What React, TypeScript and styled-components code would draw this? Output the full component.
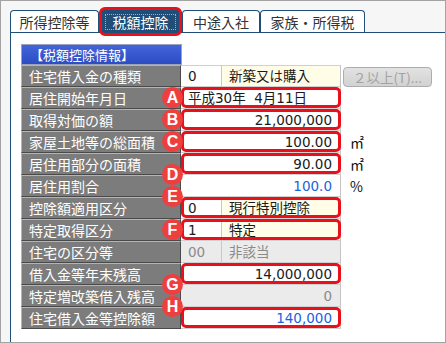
import React from 'react';
import styled, { createGlobalStyle, css } from 'styled-components';

const GlobalStyle = createGlobalStyle`
  html, body { margin: 0; padding: 0; background: #ffffff; }
  body { font-family: "DejaVu Sans", "Noto Sans CJK JP", sans-serif; }
`;

const RED = '#e8101a';
const NAVY = '#1f4e79';

const Frame = styled.div`
  width: 446px;
  height: 343px;
  box-sizing: border-box;
  border: 1px solid #a3a3a3;
  background: #f6f6f6;
  overflow: hidden;
  display: flex;
  flex-direction: column;
`;

const TabBar = styled.div`
  display: flex;
  align-items: flex-end;
  height: 31px;
  padding-left: 9px;
  flex-shrink: 0;
`;

const Tab = styled.div<{ $active?: boolean; $w: number }>`
  position: relative;
  z-index: 1;
  width: ${p => p.$w}px;
  height: 22px;
  box-sizing: border-box;
  display: flex;
  align-items: center;
  justify-content: center;
  border: 1px solid ${NAVY};
  border-bottom: none;
  border-radius: 4px 4px 0 0;
  background: #ffffff;
  color: #333333;
  font-family: "Noto Sans CJK JP", sans-serif;
  font-size: 14px;
  line-height: 20px;

  ${p =>
    p.$active &&
    css`
      background: ${NAVY};
      color: #ffffff;

      &::before {
        content: '';
        position: absolute;
        inset: 3px 5px 2px 5px;
        border: 1px dotted #9fb2c6;
      }

      &::after {
        content: '';
        position: absolute;
        top: -4px;
        bottom: -4px;
        left: -1px;
        right: -1px;
        border: 3px solid ${RED};
        border-radius: 6px;
      }
    `}
`;

const Panel = styled.div`
  flex: 1;
  margin-left: 9px;
  border-top: 1px solid ${NAVY};
  border-left: 1px solid ${NAVY};
  background: #ffffff;
  padding: 11px 0 0 10px;
`;

const Header = styled.div`
  width: 161px;
  height: 21px;
  box-sizing: border-box;
  border: 1px solid #9aa3b8;
  background: linear-gradient(#4464dc, #2c4cc4);
  color: #ffffff;
  font-family: "Noto Sans CJK JP", sans-serif;
  font-size: 13px;
  line-height: 19px;
  padding-left: 8px;
`;

const Rows = styled.div`
  display: flex;
  flex-direction: column;
`;

const Row = styled.div`
  display: flex;
  height: 22px;
`;

const Label = styled.div`
  width: 160px;
  height: 22px;
  box-sizing: border-box;
  flex-shrink: 0;
  display: flex;
  align-items: center;
  padding-left: 7px;
  background: #7c7c7c;
  border-top: 1px solid #b4b4b4;
  border-left: 1px solid #b4b4b4;
  border-bottom: 1px solid #4a4a4a;
  border-right: 1px solid #4a4a4a;
  color: #ffffff;
  font-family: "Noto Sans CJK JP", sans-serif;
  font-size: 14px;
  line-height: 20px;
`;

const Value = styled.div`
  position: relative;
  width: 160px;
  height: 22px;
  box-sizing: border-box;
  flex-shrink: 0;
  display: flex;
  border-bottom: 1px solid #d0d0d0;
  border-right: 1px solid #c4c4c4;

  ${Row}:first-child & {
    border-top: 1px solid #d0d0d0;
  }
`;

type Tone = 'plain' | 'yellow' | 'disabled';
type Ink = 'black' | 'blue' | 'gray';

const toneBg: Record<Tone, string> = {
  plain: '#ffffff',
  yellow: '#fffde8',
  disabled: '#ebebeb',
};

const inkColor: Record<Ink, string> = {
  black: '#1a1a1a',
  blue: '#1a62dc',
  gray: '#8a8a8a',
};

const Cell = styled.div<{ $tone: Tone; $ink: Ink; $right?: boolean; $code?: boolean }>`
  display: flex;
  align-items: center;
  box-sizing: border-box;
  white-space: pre;
  background: ${p => toneBg[p.$tone]};
  color: ${p => inkColor[p.$ink]};
  font-size: 13.5px;
  line-height: 20px;
  justify-content: ${p => (p.$right ? 'flex-end' : 'flex-start')};
  padding: ${p => (p.$right ? '0 8px 0 0' : '0 0 0 7px')};
  ${p =>
    p.$code
      ? css`
          width: 41px;
          flex-shrink: 0;
          border-right: 1px solid #c8c8c8;
        `
      : css`
          flex: 1;
        `}
`;

const Highlight = styled.div`
  position: absolute;
  top: 0;
  bottom: 0;
  left: 0;
  right: -1px;
  border: 3px solid ${RED};
  border-radius: 5px;
  pointer-events: none;
  z-index: 1;
`;

type BadgeAt = 'top' | 'mid' | 'bottom';
const badgeTop: Record<BadgeAt, number> = { top: -11, mid: 0, bottom: 11 };

const Badge = styled.div<{ $at: BadgeAt }>`
  position: absolute;
  left: -19px;
  top: ${p => badgeTop[p.$at]}px;
  width: 21px;
  height: 21px;
  border-radius: 50%;
  background: #ef3e3e;
  color: #ffffff;
  display: flex;
  align-items: center;
  justify-content: center;
  font-family: "Liberation Sans", Arial, sans-serif;
  font-size: 16px;
  font-weight: bold;
  z-index: 2;
`;

const Extra = styled.div`
  display: flex;
  align-items: center;
  padding-left: 9px;
  font-family: "Noto Sans CJK JP", sans-serif;
  font-size: 14px;
  color: #111111;
`;

const Button = styled.div`
  margin-left: -7px;
  margin-top: 1px;
  width: 89px;
  height: 20px;
  box-sizing: border-box;
  border: 1px solid #adadad;
  border-radius: 4px;
  background: linear-gradient(#e2e2e2, #d2d2d2);
  color: #a2a2a2;
  font-family: "Noto Sans CJK JP", sans-serif;
  font-size: 13.5px;
  line-height: 18px;
  text-align: center;
`;

type RowData = {
  label: string;
  code?: string;
  text: string;
  right?: boolean;
  tone?: Tone;
  ink?: Ink;
  unit?: string;
  button?: string;
  badge?: { letter: string; at: BadgeAt };
};

const rows: RowData[] = [
  { label: '住宅借入金の種類', code: '0', text: '新築又は購入', tone: 'yellow', button: '２以上(T)...' },
  { label: '居住開始年月日', text: '平成30年  4月11日', badge: { letter: 'A', at: 'mid' } },
  { label: '取得対価の額', text: '21,000,000', right: true, badge: { letter: 'B', at: 'mid' } },
  { label: '家屋土地等の総面積', text: '100.00', right: true, unit: '㎡', badge: { letter: 'C', at: 'mid' } },
  { label: '居住用部分の面積', text: '90.00', right: true, unit: '㎡', badge: { letter: 'D', at: 'bottom' } },
  { label: '居住用割合', text: '100.0', right: true, ink: 'blue', unit: '%' },
  { label: '控除額適用区分', code: '0', text: '現行特別控除', tone: 'yellow', badge: { letter: 'E', at: 'top' } },
  { label: '特定取得区分', code: '1', text: '特定', tone: 'yellow', badge: { letter: 'F', at: 'mid' } },
  { label: '住宅の区分等', code: '00', text: '非該当', tone: 'disabled', ink: 'gray' },
  { label: '借入金等年末残高', text: '14,000,000', right: true, badge: { letter: 'G', at: 'bottom' } },
  { label: '特定増改築借入残高', text: '0', right: true, tone: 'disabled', ink: 'gray' },
  { label: '住宅借入金等控除額', text: '140,000', right: true, ink: 'blue', badge: { letter: 'H', at: 'top' } },
];

const tabs = [
  { name: '所得控除等', w: 89 },
  { name: '税額控除', w: 83, active: true },
  { name: '中途入社', w: 78 },
  { name: '家族・所得税', w: 105 },
];

export default function App() {
  return (
    <>
      <GlobalStyle />
      <Frame>
        <TabBar>
          {tabs.map(t => (
            <Tab key={t.name} $w={t.w} $active={t.active}>
              {t.name}
            </Tab>
          ))}
        </TabBar>
        <Panel>
          <Header>【税額控除情報】</Header>
          <Rows>
            {rows.map(r => {
              const tone = r.tone ?? 'plain';
              const ink = r.ink ?? (tone === 'disabled' ? 'gray' : 'black');
              return (
                <Row key={r.label}>
                  <Label>{r.label}</Label>
                  <Value>
                    {r.code !== undefined && (
                      <Cell $code $tone={tone === 'disabled' ? 'disabled' : 'plain'} $ink={ink}>
                        {r.code}
                      </Cell>
                    )}
                    <Cell $tone={tone} $ink={ink} $right={r.right}>
                      {r.text}
                    </Cell>
                    {r.badge && <Highlight />}
                    {r.badge && <Badge $at={r.badge.at}>{r.badge.letter}</Badge>}
                  </Value>
                  {r.unit && <Extra>{r.unit}</Extra>}
                  {r.button && (
                    <Extra>
                      <Button>{r.button}</Button>
                    </Extra>
                  )}
                </Row>
              );
            })}
          </Rows>
        </Panel>
      </Frame>
    </>
  );
}
